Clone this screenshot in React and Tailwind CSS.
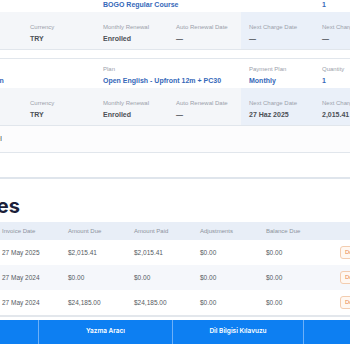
import React from "react";

const summaryCards = [
  {
    top: [
      { span: 2, label: "", value: "" },
      { span: 2, label: "Course", value: "BOGO Regular Course", blue: true },
      { span: 1, label: "Payment Plan", value: "", blue: true },
      { span: 1, label: "Quantity", value: "1", blue: true },
    ],
    bottom: [
      { label: "Start Date", value: "27 May 2024" },
      { label: "Currency", value: "TRY" },
      { label: "Monthly Renewal", value: "Enrolled" },
      { label: "Auto Renewal Date", value: "—" },
      { label: "Next Charge Date", value: "—", hl: true },
      { label: "Next Charge Amount", value: "—", hl: true },
    ],
    footer: false,
  },
  {
    top: [
      { span: 2, label: "Program", value: "Premium Plan", blue: true },
      { span: 2, label: "Plan", value: "Open English - Upfront 12m + PC30", blue: true },
      { span: 1, label: "Payment Plan", value: "Monthly", blue: true },
      { span: 1, label: "Quantity", value: "1", blue: true },
    ],
    bottom: [
      { label: "Start Date", value: "27 May 2024" },
      { label: "Currency", value: "TRY" },
      { label: "Monthly Renewal", value: "Enrolled" },
      { label: "Auto Renewal Date", value: "—" },
      { label: "Next Charge Date", value: "27 Haz 2025", hl: true },
      { label: "Next Charge Amount", value: "2,015.41", hl: true },
    ],
    footer: true,
  },
];

const invoices = [
  { date: "27 May 2025", due: "$2,015.41", paid: "$2,015.41", adj: "$0.00", bal: "$0.00" },
  { date: "27 May 2024", due: "$0.00", paid: "$0.00", adj: "$0.00", bal: "$0.00" },
  { date: "27 May 2024", due: "$24,185.00", paid: "$24,185.00", adj: "$0.00", bal: "$0.00" },
];

function SummaryCard({ card, className }) {
  return (
    <div className={"border border-[#e1e6ec] rounded-md bg-white w-[520px] -ml-[52px] " + className}>
      <div className="grid grid-cols-[repeat(7,73px)] h-[29px]">
        {card.top.map((c, i) => (
          <div key={i} className={"pl-[8px] pt-[5px] " + (c.span === 2 ? "col-span-2" : "")}>
            <div className="text-[6px] leading-[11px] text-[#9aa1ab] whitespace-nowrap">{c.label}</div>
            <div className="text-[7px] leading-[12px] font-bold text-[#3568b9] whitespace-nowrap">{c.value}</div>
          </div>
        ))}
      </div>
      <div className="grid grid-cols-[repeat(7,73px)] h-[37px] bg-[#f4f6f9]">
        {card.bottom.map((c, i) => (
          <div key={i} className={"pl-[8px] pt-[9px] " + (c.hl ? "bg-[#eaf0f9]" : "")}>
            <div className="text-[6px] leading-[12px] text-[#9aa1ab] whitespace-nowrap">{c.label}</div>
            <div className="text-[7px] leading-[12px] font-bold text-[#4b4f56] whitespace-nowrap">{c.value}</div>
          </div>
        ))}
        <div className="bg-[#eaf0f9]" />
      </div>
      {card.footer && (
        <div className="h-[27px] border-t border-[#e1e6ec] bg-[#fcfcfd] flex items-center pl-[31px]">
          <span className="text-[7px] text-[#3a3f47]">Cancel</span>
        </div>
      )}
    </div>
  );
}

export default function App() {
  return (
    <div className="w-[350px] h-[350px] overflow-hidden bg-white font-['Liberation_Sans',Arial,sans-serif]">
      <div className="flex flex-col -mt-[18px]">
        <SummaryCard card={summaryCards[0]} className="" />
        <SummaryCard card={summaryCards[1]} className="mt-[8px]" />

        <div className="mt-[24px] h-[2px] bg-[#dfe5ec]" />

        <h2 className="mt-[15px] -ml-[62px] text-[20px] leading-[24px] font-bold text-[#1c1f3a] font-['Inter',sans-serif]">
          Invoices
        </h2>

        <div className="mt-[4px] -ml-[6px] w-[420px]">
          <div className="grid grid-cols-[repeat(5,66px)_1fr] h-[18px] items-center bg-[#e8eef7] text-[6px] text-[#8c939d]">
            <div className="pl-[8px]">Invoice Date</div>
            <div className="pl-[8px]">Amount Due</div>
            <div className="pl-[8px]">Amount Paid</div>
            <div className="pl-[8px]">Adjustments</div>
            <div className="pl-[8px]">Balance Due</div>
            <div />
          </div>
          {invoices.map((r, i) => (
            <div
              key={i}
              className={
                "grid grid-cols-[repeat(5,66px)_1fr] h-[25px] items-center text-[6.5px] text-[#555a62] " +
                (i === 1 ? "bg-[#f5f7fb]" : "bg-white")
              }
            >
              <div className="pl-[8px]">{r.date}</div>
              <div className="pl-[8px]">{r.due}</div>
              <div className="pl-[8px]">{r.paid}</div>
              <div className="pl-[8px]">{r.adj}</div>
              <div className="pl-[8px]">{r.bal}</div>
              <div className="pl-[16px]">
                <span className="inline-flex items-center h-[13px] px-[4px] rounded-[3px] border border-[#f3cdb0] bg-[#fff8f2] text-[#e8874c] text-[6px]">
                  Download
                </span>
              </div>
            </div>
          ))}
          <div className="h-[2px] bg-[#e3e7ec]" />
        </div>

        <div className="mt-[3px] h-[24px] bg-[#0d7ff2] flex -ml-[96px] font-['Inter',sans-serif]">
          <div className="w-[134px] shrink-0 flex items-center justify-center text-white text-[6.5px] font-semibold">
            Sözlük
          </div>
          <div className="w-[134px] shrink-0 border-l border-[#6db0f8] flex items-center justify-center text-white text-[6.5px] font-semibold">
            Yazma Aracı
          </div>
          <div className="w-[131px] shrink-0 border-l border-[#6db0f8] flex items-center justify-center text-white text-[6.5px] font-semibold">
            Dil Bilgisi Kılavuzu
          </div>
          <div className="w-[134px] shrink-0 border-l border-[#6db0f8] flex items-center justify-center text-white text-[6.5px] font-semibold">
            Telaffuz
          </div>
        </div>
      </div>
    </div>
  );
}
